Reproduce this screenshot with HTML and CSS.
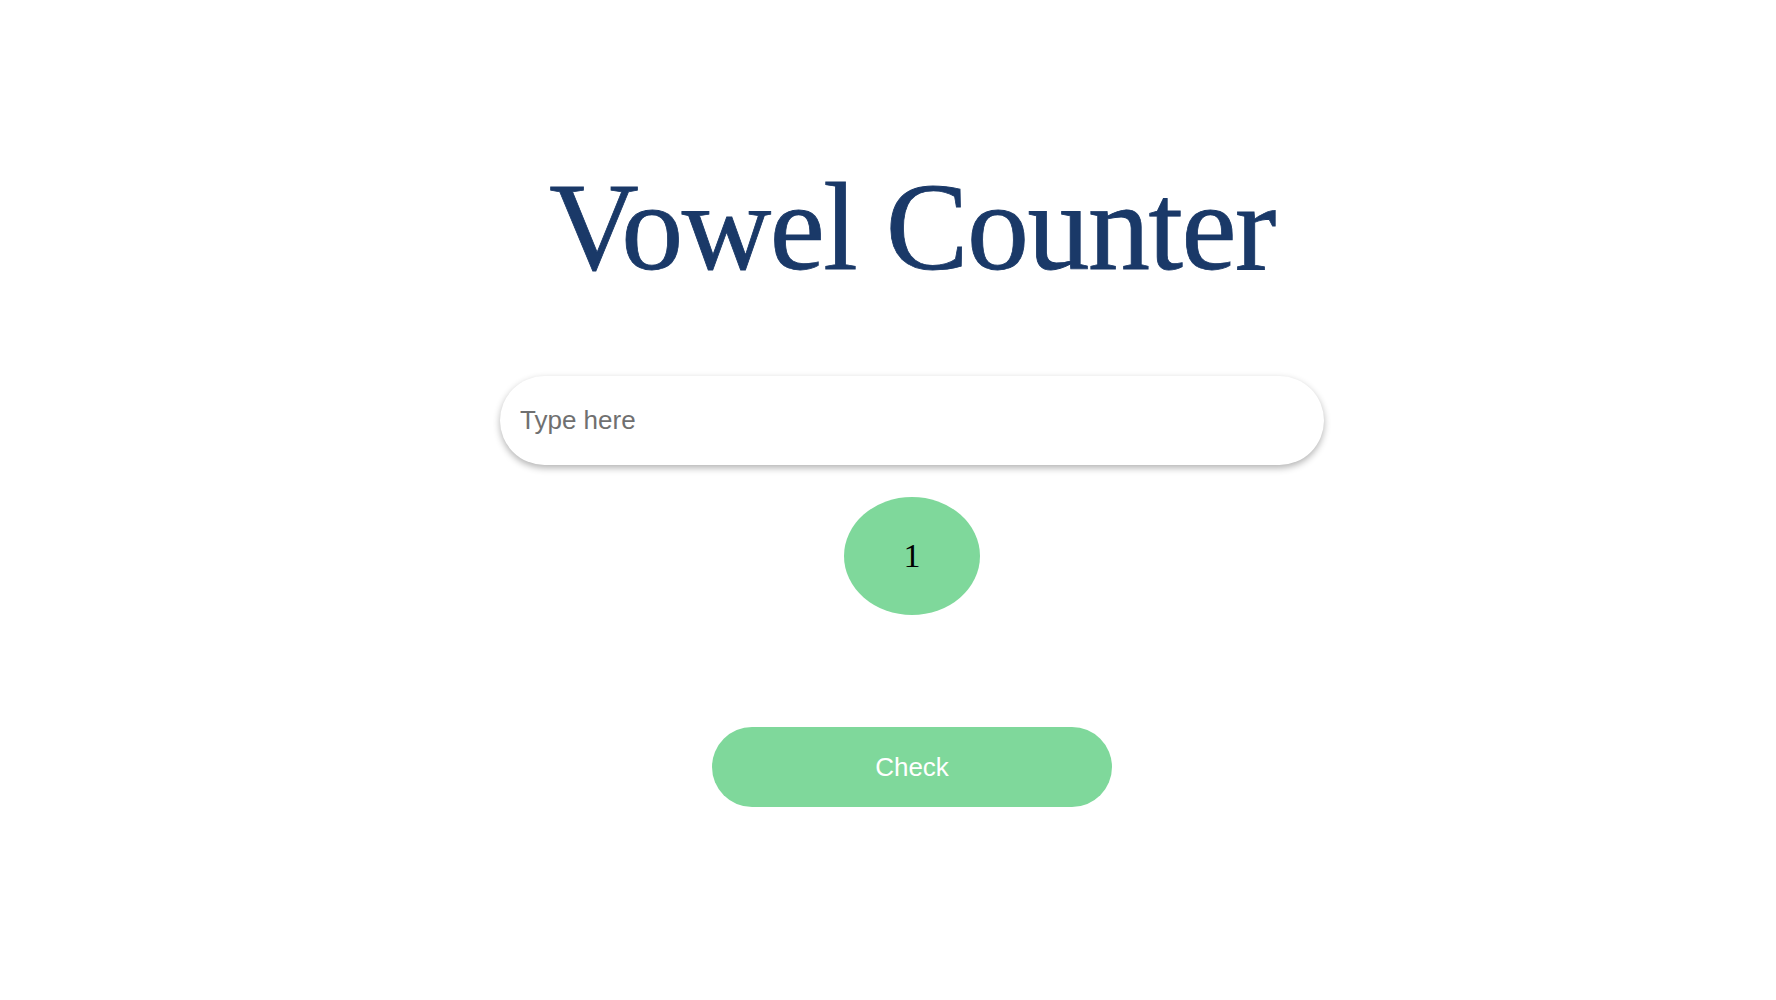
FILE: index.html
```html
<!DOCTYPE html>
<html lang="en">
<head>
<meta charset="utf-8">
<title>Vowel Counter</title>
<link rel="stylesheet" href="styles.css">
</head>
<body>
<main class="app">
  <h1 class="title">Vowel Counter</h1>
  <input class="text-input" type="text" placeholder="Type here">
  <div class="result">1</div>
  <button class="check-btn" type="button">Check</button>
</main>
</body>
</html>
```
FILE: styles.css
```css
html, body {
  margin: 0;
  padding: 0;
  background: #ffffff;
}

.app {
  display: flex;
  flex-direction: column;
  align-items: center;
  padding: 157px 0 0 48px;
}

.title {
  margin: 0;
  font-family: "Liberation Serif", "Times New Roman", serif;
  font-weight: normal;
  font-size: 124px;
  line-height: 142px;
  letter-spacing: -1.5px;
  color: #1a3968;
  -webkit-text-stroke: 0.8px #1a3968;
}

.text-input {
  margin-top: 77px;
  box-sizing: border-box;
  width: 824px;
  height: 89px;
  border: none;
  border-radius: 45px;
  padding: 0 20px;
  font-family: "Liberation Sans", Arial, sans-serif;
  font-size: 26px;
  color: #333333;
  background: #ffffff;
  box-shadow: 0 3px 7px rgba(0, 0, 0, 0.3);
  outline: none;
}

.text-input::placeholder {
  color: #707070;
}

.result {
  margin-top: 32px;
  width: 136px;
  height: 118px;
  border-radius: 50%;
  background: #7fd89b;
  display: flex;
  align-items: center;
  justify-content: center;
  font-family: "Liberation Serif", "Times New Roman", serif;
  font-size: 34px;
  color: #000000;
}

.check-btn {
  margin-top: 112px;
  width: 400px;
  height: 80px;
  border: none;
  border-radius: 40px;
  background: #7fd89b;
  color: #ffffff;
  font-family: "Liberation Sans", Arial, sans-serif;
  font-size: 26px;
  cursor: pointer;
}
```
